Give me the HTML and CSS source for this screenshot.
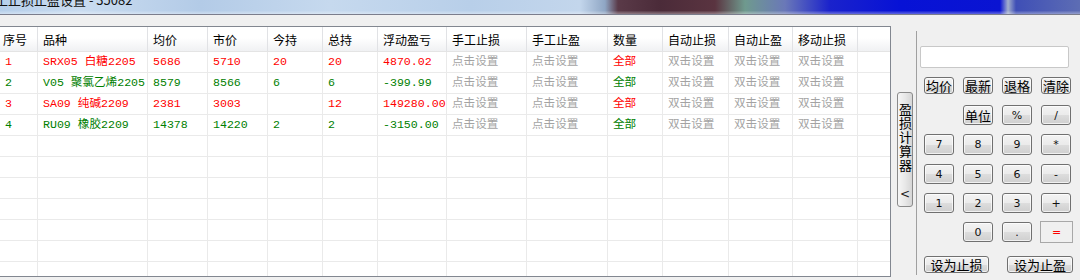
FILE: index.html
```html
<!DOCTYPE html>
<html>
  <head>
    <title>止损止盈设置</title>
    <link rel="stylesheet" href="styles.css">
  </head>
  <body>
    <div class="titlebar">
      <span class="title">工止损止盈设置 - 35082</span>
    </div>

    <div class="main">
      <div class="grid-wrap">
        <table class="grid">
          <colgroup>
            <col style="width: 38px">
            <col style="width: 110px">
            <col style="width: 60px">
            <col style="width: 60px">
            <col style="width: 55px">
            <col style="width: 55px">
            <col style="width: 69px">
            <col style="width: 80px">
            <col style="width: 81px">
            <col style="width: 55px">
            <col style="width: 66px">
            <col style="width: 64px">
            <col style="width: 65px">
            <col style="width: 32px">
          </colgroup>
          <thead>
            <tr>
              <th class="first">序号</th>
              <th>品种</th>
              <th>均价</th>
              <th>市价</th>
              <th>今持</th>
              <th>总持</th>
              <th>浮动盈亏</th>
              <th>手工止损</th>
              <th>手工止盈</th>
              <th>数量</th>
              <th>自动止损</th>
              <th>自动止盈</th>
              <th>移动止损</th>
              <th></th>
            </tr>
          </thead>
          <tbody id="rows"></tbody>
        </table>
      </div>

      <div class="side">
        <div class="tab-col">
          <div class="fold-btn">
            <span class="fold-text">盈损计算器</span>
            <span class="fold-arrow">&lt;</span>
          </div>
        </div>

        <div class="calc">
          <input class="calc-input" type="text">
          <div class="keypad">
            <button class="key cn short">均价</button>
            <button class="key cn short">最新</button>
            <button class="key cn short">退格</button>
            <button class="key cn short">清除</button>

            <span></span>
            <button class="key cn">单位</button>
            <button class="key">%</button>
            <button class="key">/</button>

            <button class="key">7</button>
            <button class="key">8</button>
            <button class="key">9</button>
            <button class="key">*</button>

            <button class="key">4</button>
            <button class="key">5</button>
            <button class="key">6</button>
            <button class="key">-</button>

            <button class="key">1</button>
            <button class="key">2</button>
            <button class="key">3</button>
            <button class="key">+</button>

            <span></span>
            <button class="key">0</button>
            <button class="key">.</button>
            <button class="key eq">=</button>
          </div>
          <div class="set-row">
            <button class="key cn set">设为止损</button>
            <button class="key cn set wide">设为止盈</button>
          </div>
        </div>
      </div>
    </div>

    <script>
      // positions: up = red, down = green
      const positions = [
        { no: 1, name: "SRX05 白糖2205", avg: "5686", last: "5710", today: "20", total: "20", pnl: "4870.02", up: true },
        { no: 2, name: "V05 聚氯乙烯2205", avg: "8579", last: "8566", today: "6", total: "6", pnl: "-399.99", up: false },
        { no: 3, name: "SA09 纯碱2209", avg: "2381", last: "3003", today: "", total: "12", pnl: "149280.00", up: true },
        { no: 4, name: "RU09 橡胶2209", avg: "14378", last: "14220", today: "2", total: "2", pnl: "-3150.00", up: false },
      ];

      const body = document.getElementById("rows");

      function cell(row, text, cls) {
        const td = document.createElement("td");
        td.textContent = text;
        if (cls) td.className = cls;
        row.appendChild(td);
      }

      for (let i = 0; i < positions.length; i++) {
        const p = positions[i];
        const row = document.createElement("tr");
        row.className = p.up ? "up" : "down";
        cell(row, p.no);
        cell(row, p.name);
        cell(row, p.avg);
        cell(row, p.last);
        cell(row, p.today);
        cell(row, p.total);
        cell(row, p.pnl);
        cell(row, "点击设置", "hint");
        cell(row, "点击设置", "hint");
        cell(row, "全部");
        cell(row, "双击设置", "hint");
        cell(row, "双击设置", "hint");
        cell(row, "双击设置", "hint");
        cell(row, "");
        body.appendChild(row);
      }

      // blank rows to fill the grid
      for (let i = 0; i < 8; i++) {
        const row = document.createElement("tr");
        for (let j = 0; j < 14; j++) cell(row, "");
        body.appendChild(row);
      }
    </script>
  </body>
</html>
```

FILE: styles.css
```css
body {
  margin: 0;
  width: 1080px;
  height: 280px;
  overflow: hidden;
  background-color: #f0f0f0;
  font-family: "Liberation Mono", "Noto Sans CJK SC", monospace;
}

.titlebar {
  height: 14px;
  overflow: hidden;
  border-bottom: 1px solid #7b7d8c;
  background:
    linear-gradient(180deg, rgba(255, 255, 255, 0) 75%, rgba(255, 255, 255, 0.35) 100%),
    linear-gradient(90deg, #b6cfea 0, #cadcf0 80px, #b3cbe7 200px, #c6d9ee 330px,
      #b8cfe9 470px, #c3d6ec 580px, #8fa6c4 605px, #5a3a48 618px, #4b2b39 660px,
      #5a3440 715px, #6f9a8e 745px, #6a78b8 785px, #1a22cc 830px, #0712d6 900px,
      #0a14d2 1000px, #a3afcc 1008px, #3f4fb6 1016px, #5d6db4 1080px);
}

.title {
  display: block;
  margin: -6px 0 0 -5px;
  font: 13px/12px "Noto Sans CJK SC", sans-serif;
  color: #111;
  white-space: nowrap;
}

.main {
  display: flex;
}

.grid-wrap {
  width: 890px;
  height: 249px;
  margin-top: 11px;
  border-top: 1px solid #828790;
  border-right: 1px solid #828790;
  border-bottom: 1px solid #828790;
  background-color: #fff;
  overflow: hidden;
}

.grid {
  width: 890px;
  table-layout: fixed;
  border-collapse: separate;
  border-spacing: 0;
}

th {
  height: 24px;
  padding: 0 5px;
  text-align: left;
  font: 12px "Noto Sans CJK SC", sans-serif;
  color: #000;
  background: linear-gradient(#ffffff 0, #ffffff 45%, #f0f1f3 100%);
  border-right: 1px solid #e1e2e5;
  border-bottom: 1px solid #e4e4e4;
  white-space: nowrap;
  overflow: hidden;
}

th.first {
  padding-left: 3px;
}

th:last-child {
  border-right: none;
}

td {
  height: 20px;
  padding: 0 4px 0 5px;
  font-size: 11.6px;
  line-height: 20px;
  border-right: 1px solid #eaeaea;
  border-bottom: 1px solid #eaeaea;
  white-space: nowrap;
  overflow: hidden;
  text-overflow: clip;
}

td:last-child {
  border-right: none;
}

.up td {
  color: #ff0000;
}

.down td {
  color: #008000;
}

.up td.hint,
.down td.hint {
  color: #a3a3a3;
}

.side {
  display: flex;
}

.tab-col {
  width: 25px;
  padding-top: 77px;
}

.fold-btn {
  margin-left: 6px;
  width: 14px;
  height: 113px;
  border: 1px solid #8a8a8a;
  border-radius: 3px;
  background: linear-gradient(90deg, #f6f6f6 0, #e8e8e8 50%, #d6d6d6 100%);
  display: flex;
  flex-direction: column;
  align-items: center;
}

.fold-text {
  margin-top: 10px;
  writing-mode: vertical-rl;
  text-orientation: upright;
  font: 13px/14px "Noto Sans CJK SC", sans-serif;
  letter-spacing: 1px;
  color: #000;
}

.fold-arrow {
  margin-top: 14px;
  font: 12px "DejaVu Sans", sans-serif;
  color: #222;
}

.calc {
  margin-top: 16px;
  height: 244px;
  border-left: 1px solid #a0a0a0;
}

.calc-input {
  display: block;
  box-sizing: border-box;
  margin: 15px 0 0 3px;
  width: 149px;
  height: 22px;
  padding: 0;
  border: 1px solid #c8c8c8;
  border-radius: 2px;
  background-color: #fff;
  outline: none;
}

.keypad {
  display: grid;
  grid-template-columns: repeat(4, 30px);
  grid-template-rows: 19px 20px 21px 20px 20px 20px;
  column-gap: 9px;
  row-gap: 9px;
  margin: 9px 0 0 7px;
}

.key {
  box-sizing: border-box;
  width: 30px;
  height: 100%;
  padding: 0;
  border: 1px solid #707070;
  border-radius: 3px;
  background: linear-gradient(#f3f3f3 0, #ebebeb 50%, #dddddd 51%, #cfcfcf 100%);
  box-shadow: inset 0 0 0 1px rgba(255, 255, 255, 0.7);
  font: 11px/1 "DejaVu Sans", sans-serif;
  color: #111;
  cursor: pointer;
}

.key.cn {
  font: 13px/1 "Noto Sans CJK SC", sans-serif;
  color: #000;
}

.key.short {
  height: 17px;
}

.keypad .key.eq {
  width: 33px;
  height: 22px;
  margin: -1px 0 0 -1px;
  border: 1px solid #a8a8a8;
  border-radius: 0;
  background: #f0f0f0;
  box-shadow: none;
  color: #ff0000;
}

.set-row {
  display: flex;
  gap: 18px;
  margin: 14px 0 0 7px;
}

.key.set {
  width: 65px;
  height: 17px;
}

.key.set.wide {
  width: 66px;
}
```
